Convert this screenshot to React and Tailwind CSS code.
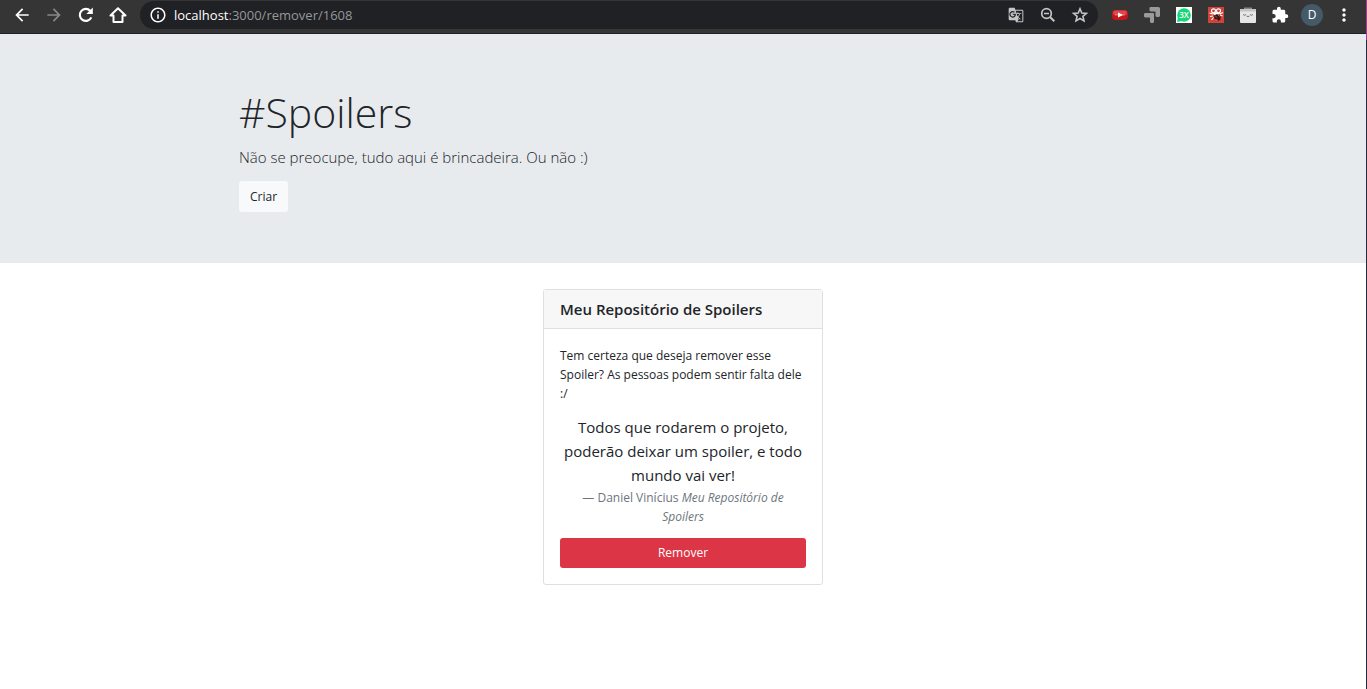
import {
  MdArrowBack,
  MdArrowForward,
  MdInfoOutline,
  MdGTranslate,
  MdExtension,
  MdMoreVert,
} from "react-icons/md";

function RefreshIcon() {
  return (
    <svg width="20" height="20" viewBox="0 0 20 20" aria-hidden="true">
      <path d="M15.300 12.400 A6 6 0 1 1 14.200 5.800" fill="none" stroke="#fff" strokeWidth="2.200" />
      <path d="M16.800 2.500 V9 H10.300 Z" fill="#fff" />
    </svg>
  );
}

function HomeIcon() {
  return (
    <svg width="20" height="20" viewBox="0 0 20 20" fill="none" stroke="#fff" strokeWidth="2" aria-hidden="true">
      <path d="M2.500 10.500 H5.500 V17 H14.500 V10.500 H17.500 L10 3.300 Z" strokeLinejoin="round" />
    </svg>
  );
}

function ZoomOutIcon() {
  return (
    <svg width="18" height="18" viewBox="0 0 18 18" fill="none" stroke="currentColor" aria-hidden="true">
      <circle cx="7.500" cy="7.500" r="4.800" strokeWidth="1.700" />
      <path d="M11 11 L15.300 15.300" strokeWidth="2" />
      <path d="M5 7.500 H10" strokeWidth="1.500" />
    </svg>
  );
}

function StarIcon() {
  return (
    <svg width="18" height="18" viewBox="0 0 18 18" fill="none" stroke="currentColor" strokeWidth="1.600" aria-hidden="true">
      <path d="M9 2.800 L10.800 7 L15.400 7.400 L11.900 10.400 L13 14.900 L9 12.500 L5 14.900 L6.100 10.400 L2.600 7.400 L7.200 7 Z" />
    </svg>
  );
}

function VideoIcon() {
  return (
    <svg width="16" height="16" viewBox="0 0 16 16" aria-hidden="true">
      <rect x="0" y="3" width="16" height="10" rx="4" fill="#c3161d" />
      <rect x="1" y="3.500" width="14" height="4.500" rx="2.200" fill="#e0454a" />
      <path d="M6 5.500 L11 8 L6 10.500 Z" fill="#fff" />
      <path d="M3 8 H13" stroke="#fff" strokeOpacity="0.500" strokeWidth="0.800" />
    </svg>
  );
}

function CornersIcon() {
  return (
    <svg width="16" height="16" viewBox="0 0 16 16" fill="#9a9a9a" aria-hidden="true">
      <path d="M6 0 H14.500 Q16 0 16 1.500 V9 L15 10 H12.500 L11.500 9 V4.500 H6.500 L5.500 3.500 V1 Z" />
      <path d="M1 6 H9 Q10 6 10 7 V15 L9 16 H7 L6 15 V10.500 H1 L0 9.500 V7 Z" />
    </svg>
  );
}

function SpeedIcon() {
  return (
    <svg width="16" height="16" viewBox="0 0 16 16" aria-hidden="true">
      <rect width="16" height="16" fill="#fff" />
      <circle cx="8" cy="8" r="6.800" fill="#16d777" />
      <path d="M2 10 L1 15 L6 14 Z" fill="#16d777" />
      <text x="8" y="11" textAnchor="middle" fontSize="8" fontFamily="Open Sans, sans-serif" fontWeight="600" fill="#fff">3X</text>
    </svg>
  );
}

function CreatureIcon() {
  return (
    <svg width="16" height="16" viewBox="0 0 16 16" aria-hidden="true">
      <rect width="16" height="16" fill="#cf4339" />
      <g fill="none" stroke="#fff" strokeWidth="1.200">
        <circle cx="5.500" cy="3.800" r="2" />
        <circle cx="10.500" cy="3.800" r="2" />
        <path d="M5 7 L1.500 6 M5 9 L2 9.500 M5.500 10.500 L3.500 13 M11.500 7 L15 5.500 M12 8 L14.500 9" />
      </g>
      <path d="M4.500 6.500 L8 5 L12 6.500 L8 9 Z" fill="#fff" />
      <path d="M6 8.500 L9 7 L11 8 L12.500 9 V12.500 L10.500 14 L9 12 L6.500 12 Z" fill="#351917" />
      <path d="M7 8.500 L9 10.500 M9.500 7.500 L11.500 9.500" stroke="#b9564b" />
    </svg>
  );
}

function BoxIcon() {
  return (
    <svg width="16" height="16" viewBox="0 0 16 16" aria-hidden="true">
      <path d="M4 2 V0.500 H12 V2" fill="#888" />
      <path d="M0 2 H16 V15 Q16 16 15 16 H1 Q0 16 0 15 Z" fill="#e6e6e6" />
      <rect x="0" y="2" width="16" height="2.500" fill="#c4c4c4" />
      <path d="M3 7.500 Q4.500 9 6 7.500 M10 7.500 Q11.500 9 13 7.500 M6.500 9 Q8 10.200 9.500 9" fill="none" stroke="#666" strokeWidth="0.900" />
    </svg>
  );
}

const extensions = [
  { name: "Vídeo", Icon: VideoIcon },
  { name: "Cantos", Icon: CornersIcon },
  { name: "Velocidade", Icon: SpeedIcon },
  { name: "Depurador", Icon: CreatureIcon },
  { name: "Caixa", Icon: BoxIcon },
];

function IconButton({ label, children }) {
  return (
    <button type="button" aria-label={label} className="flex size-5 items-center justify-center">
      {children}
    </button>
  );
}

function BrowserBar() {
  return (
    <header className="flex h-[34px] items-start border-b border-[#202124] bg-[#353535] pl-3 text-white">
      <nav className="flex h-[30px] shrink-0 items-center gap-3">
        <IconButton label="Voltar"><MdArrowBack size={20} /></IconButton>
        <IconButton label="Avançar"><MdArrowForward size={20} className="text-[#888]" /></IconButton>
        <IconButton label="Recarregar"><RefreshIcon /></IconButton>
        <IconButton label="Página inicial"><HomeIcon /></IconButton>
      </nav>
      <div className="ml-3 mt-px flex h-7 min-w-0 flex-1 items-center rounded-full bg-[#202124] px-2">
        <IconButton label="Informações do site"><MdInfoOutline size={18} /></IconButton>
        <div className="ml-[6px] min-w-0 flex-1 truncate text-[13px] leading-5 text-[#969799]">
          <span className="text-white">localhost</span>:3000/remover/1608
        </div>
        <div className="flex items-center gap-3 text-[#c4c5c7]">
          <IconButton label="Traduzir"><MdGTranslate size={16} /></IconButton>
          <IconButton label="Zoom"><ZoomOutIcon /></IconButton>
          <IconButton label="Favoritar"><StarIcon /></IconButton>
        </div>
      </div>
      <div className="flex h-[30px] shrink-0 items-center gap-3 px-3">
        {extensions.map(({ name, Icon }) => (
          <IconButton key={name} label={name}><Icon /></IconButton>
        ))}
        <IconButton label="Extensões"><MdExtension size={18} /></IconButton>
        <button type="button" aria-label="Perfil" className="-mx-px flex size-[22px] items-center justify-center rounded-full bg-[#455a68] text-[12px]">
          D
        </button>
        <IconButton label="Menu"><MdMoreVert size={20} /></IconButton>
      </div>
    </header>
  );
}

export default function App() {
  return (
    <div className="flex min-h-screen bg-white font-['Open_Sans','Noto_Sans',sans-serif] text-[#212529]">
      <div className="min-w-0 flex-1">
        <BrowserBar />
        <section className="bg-[#e8ebee] px-4 pb-[51px] pt-[54px]">
          <div className="mx-auto max-w-[888px]">
            <h1 className="mb-2 text-[41px] font-light leading-[49px]">#Spoilers</h1>
            <p className="mb-3 text-[15px] font-light leading-6">
              Não se preocupe, tudo aqui é brincadeira. Ou não :)
            </p>
            <button type="button" className="block h-[31px] rounded-[3px] bg-[#f8f9fa] px-[11px] text-[12px]">
              Criar
            </button>
          </div>
        </section>
        <main className="px-4 pt-[26px]">
          <article className="mx-auto max-w-[280px] rounded-[3px] border border-[#dfdfdf]">
            <h2 className="border-b border-[#dfdfdf] bg-[#f7f7f7] px-4 py-2 text-[15px] font-semibold leading-[22px]">
              Meu Repositório de Spoilers
            </h2>
            <div className="px-4 pb-4 pt-[17px]">
              <p className="mb-3 text-[12px] leading-[19px]">
                Tem certeza que deseja remover esse Spoiler? As pessoas podem sentir falta dele :/
              </p>
              <blockquote className="mb-3 text-center">
                <p className="text-[15px] leading-6">
                  Todos que rodarem o projeto, poderão deixar um spoiler, e todo mundo vai ver!
                </p>
                <footer className="pt-px text-[12px] leading-[19px] text-[#6c757d]">
                  — Daniel Vinícius <cite>Meu Repositório de Spoilers</cite>
                </footer>
              </blockquote>
              <button type="button" className="block h-[30px] w-full rounded-[3px] bg-[#dc3545] text-[12px] text-white">
                Remover
              </button>
            </div>
          </article>
        </main>
      </div>
      <div aria-hidden="true" className="flex w-px flex-col bg-[#252b3d]">
        <div className="h-10 bg-[#a0408a]" />
      </div>
    </div>
  );
}
